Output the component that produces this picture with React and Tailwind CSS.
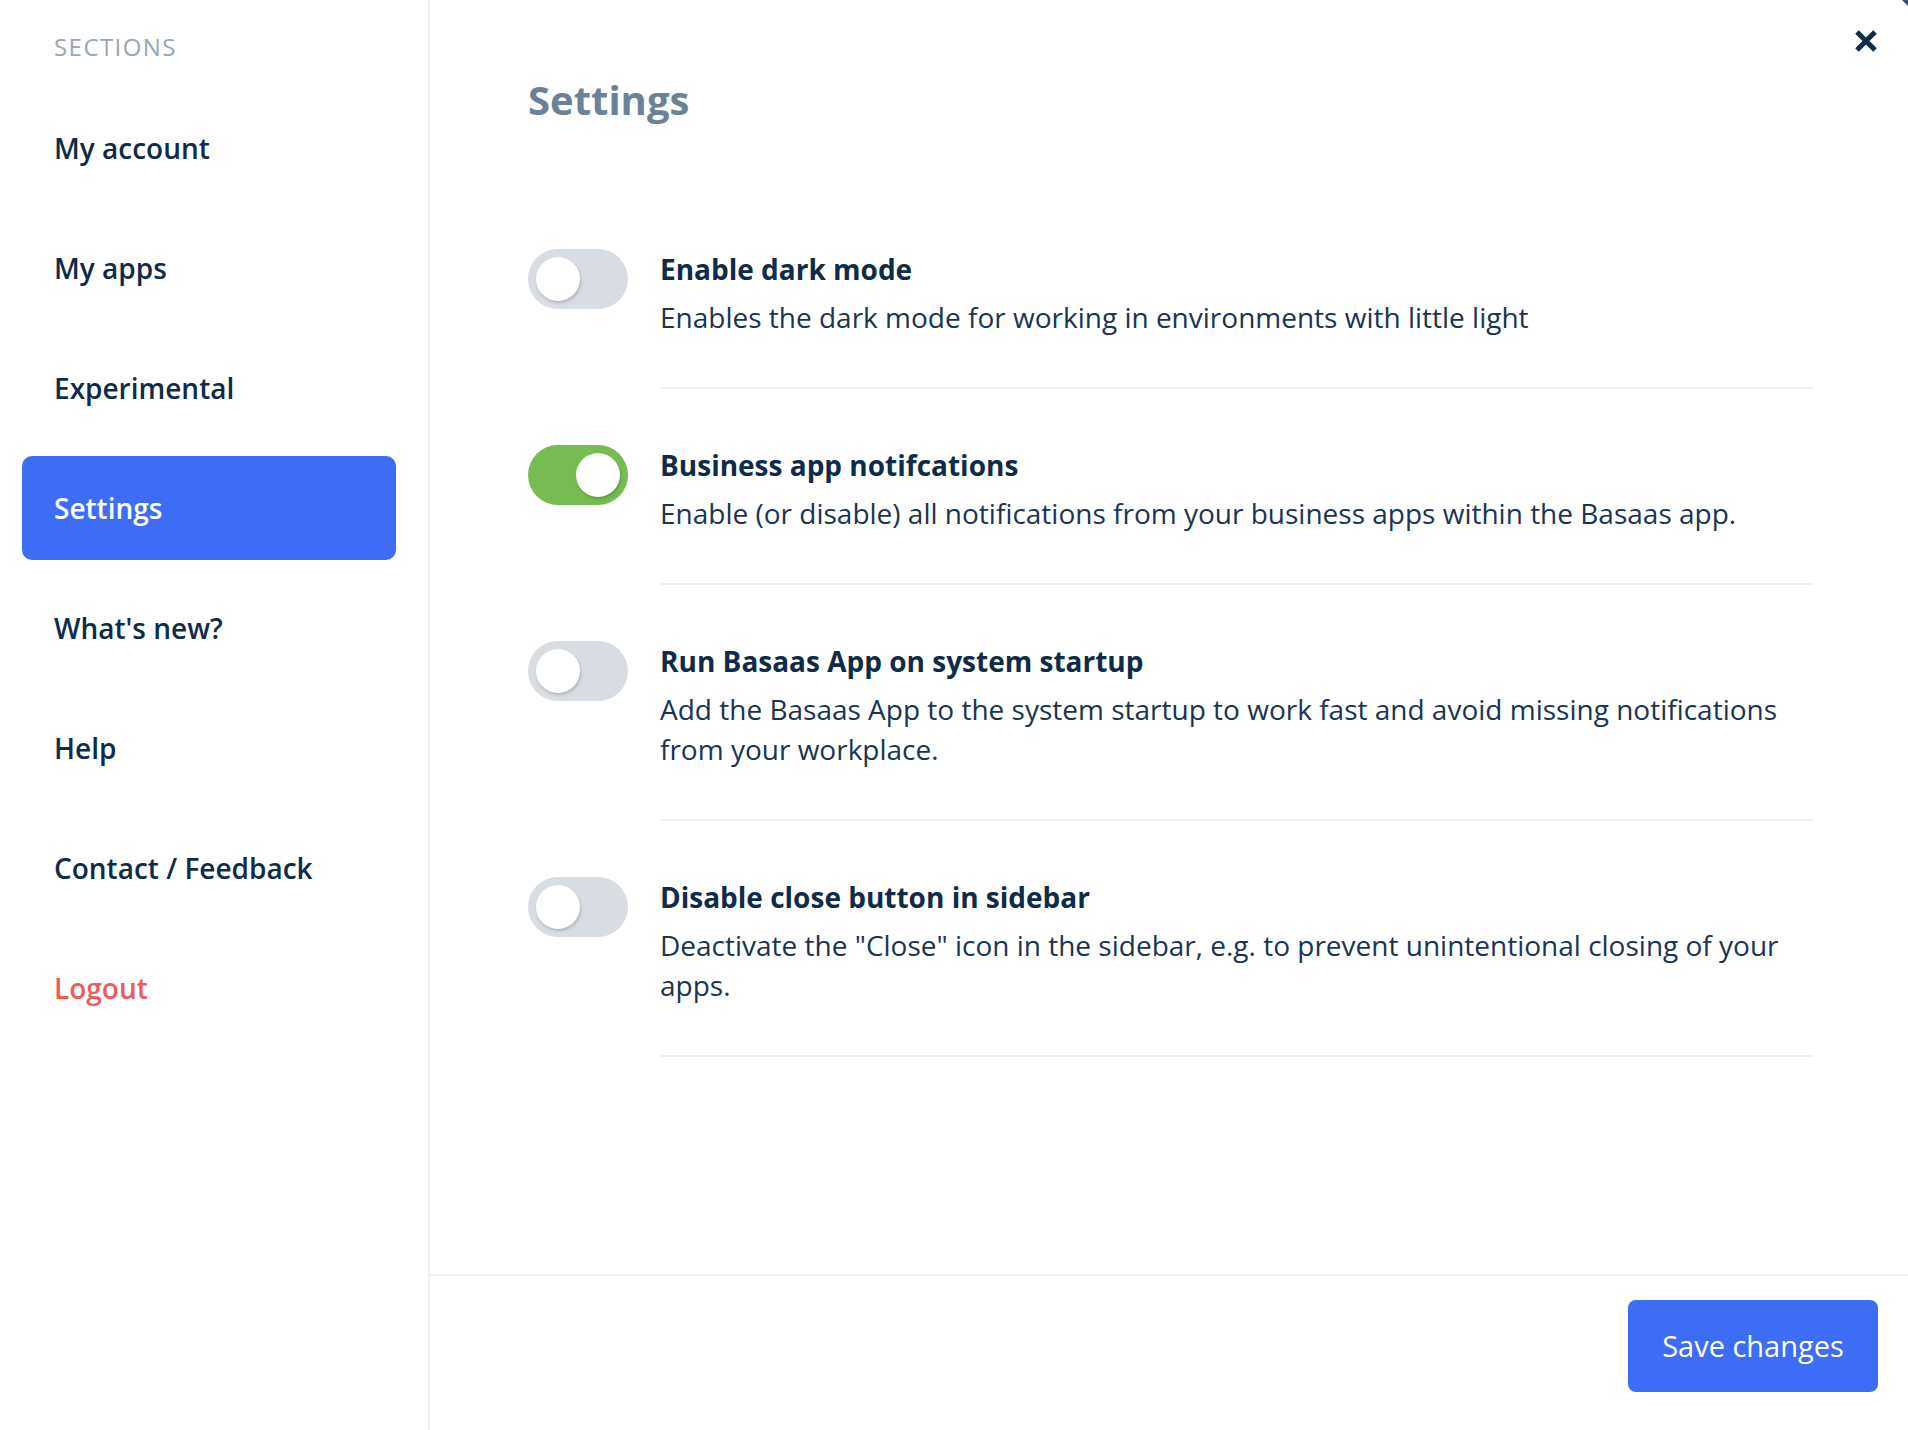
import React, { useState } from "react";

const sections = [
  "My account",
  "My apps",
  "Experimental",
  "Settings",
  "What's new?",
  "Help",
  "Contact / Feedback",
];

const settings = [
  {
    id: "dark",
    title: "Enable dark mode",
    text: "Enables the dark mode for working in environments with little light",
    on: false,
  },
  {
    id: "notify",
    title: "Business app notifcations",
    text: "Enable (or disable) all notifications from your business apps within the Basaas app.",
    on: true,
  },
  {
    id: "startup",
    title: "Run Basaas App on system startup",
    text: "Add the Basaas App to the system startup to work fast and avoid missing notifications from your workplace.",
    on: false,
  },
  {
    id: "close",
    title: "Disable close button in sidebar",
    text: 'Deactivate the "Close" icon in the sidebar, e.g. to prevent unintentional closing of your apps.',
    on: false,
  },
];

function Toggle({ on, onChange }) {
  return (
    <button
      onClick={onChange}
      className={
        "relative h-[60px] w-[100px] shrink-0 rounded-full transition " +
        (on ? "bg-[#76bc52]" : "bg-[#d7dde3]")
      }
    >
      <span
        className={
          "absolute top-[8px] h-[44px] w-[44px] rounded-full bg-white shadow-[1px_2px_3px_rgba(0,0,0,0.18)] transition-all " +
          (on ? "left-[48px]" : "left-[8px]")
        }
      />
    </button>
  );
}

export default function App() {
  const [active, setActive] = useState("Settings");
  const [values, setValues] = useState(
    Object.fromEntries(settings.map((s) => [s.id, s.on]))
  );

  return (
    <div className="relative flex h-[1430px] w-full bg-white font-['Open_Sans',sans-serif] text-[#0f2b4a]">
      {/* SIDEBAR */}
      <aside className="w-[430px] shrink-0 border-r-2 border-[#edf1f5] pl-[22px] pr-[32px]">
        <div className="pl-8 pt-[31px] text-[24px] font-medium leading-[32px] tracking-[0.06em] text-[#97a7b5]">
          SECTIONS
        </div>
        <nav className="mt-[33px] flex flex-col gap-4">
          {sections.map((name) => (
            <button
              key={name}
              onClick={() => setActive(name)}
              className={
                "flex h-[104px] items-center rounded-[10px] px-8 text-left text-[28px] font-semibold " +
                (active === name ? "bg-[#3d6cf5] text-white" : "text-[#0f2b4a]")
              }
            >
              {name}
            </button>
          ))}
          <button className="flex h-[104px] items-center rounded-[10px] px-8 text-left text-[28px] font-semibold text-[#ef5a5a]">
            Logout
          </button>
        </nav>
      </aside>

      {/* MAIN */}
      <main className="relative flex flex-1 flex-col">
        <button className="absolute right-[30px] top-[29px] h-[24px] w-[24px] text-[#0d2b4a]">
          <svg viewBox="0 0 24 24" width="24" height="24">
            <path
              d="M3 3 L21 21 M21 3 L3 21"
              stroke="currentColor"
              strokeWidth="5"
              fill="none"
            />
          </svg>
        </button>

        <div className="flex-1 pl-[98px] pr-[95px] pt-[72px]">
          <h1 className="text-[40px] font-bold leading-[56px] text-[#6b8198]">
            Settings
          </h1>

          <div className="mt-[65px]">
            {settings.map((s) => (
              <div key={s.id} className="flex gap-8 pt-[56px]">
                <Toggle
                  on={values[s.id]}
                  onChange={() =>
                    setValues((v) => ({ ...v, [s.id]: !v[s.id] }))
                  }
                />
                <div className="flex-1 border-b-2 border-[#edf0f3] pb-[50px]">
                  <h3 className="text-[28px] font-bold leading-[40px]">
                    {s.title}
                  </h3>
                  <p className="mt-2 text-[28px] leading-[40px] text-[#1a3453]">
                    {s.text}
                  </p>
                </div>
              </div>
            ))}
          </div>
        </div>

        <footer className="flex h-[156px] justify-end border-t-2 border-[#edf0f3] pr-[30px] pt-[24px]">
          <button className="h-[92px] w-[250px] rounded-[8px] bg-[#3d6cf5] text-[29px] font-medium text-white">
            Save changes
          </button>
        </footer>
      </main>

      {/* window corner */}
      <div className="absolute right-0 top-0 h-[6px] w-[6px] bg-[#3a5068] [clip-path:polygon(0_0,100%_0,100%_100%)]" />
    </div>
  );
}
